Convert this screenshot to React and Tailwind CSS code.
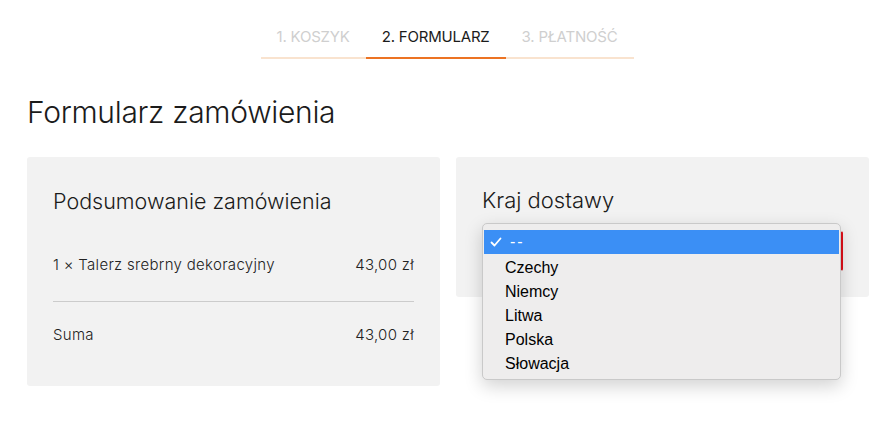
import React from "react";

const steps = [
  { label: "1. KOSZYK", active: false },
  { label: "2. FORMULARZ", active: true },
  { label: "3. PŁATNOŚĆ", active: false },
];

const countries = ["Czechy", "Niemcy", "Litwa", "Polska", "Słowacja"];

function Steps() {
  return (
    <div className="flex justify-center pt-[27px]">
      <div className="flex">
        {steps.map((s) => (
          <div
            key={s.label}
            className={`px-4 pb-[10px] text-[15px] leading-[20px] tracking-[-0.2px] border-b-2 ${
              s.active ? "text-[#1b1b1b] border-[#ec7323]" : "text-[#cfcfcf] border-[#f9e3cf]"
            }`}
          >
            {s.label}
          </div>
        ))}
      </div>
    </div>
  );
}

function SummaryCard() {
  return (
    <div className="bg-[#f2f2f2] rounded-[3px] px-[26px] pt-[30px] pb-[41px]">
      <h2 className="text-[21.5px] leading-[28px] font-light text-[#1b1b1b]">Podsumowanie zamówienia</h2>
      <div className="flex justify-between mt-[40px] text-[15px] leading-[20px] tracking-[0.3px] text-[#222] font-light">
        <span>1 × Talerz srebrny dekoracyjny</span>
        <span>43,00 zł</span>
      </div>
      <div className="h-px bg-[#cccccc] mt-[26px]" />
      <div className="flex justify-between mt-[23px] text-[15px] leading-[20px] tracking-[0.3px] text-[#222] font-light">
        <span>Suma</span>
        <span>43,00 zł</span>
      </div>
    </div>
  );
}

function CountryCard() {
  return (
    <div className="relative bg-[#f2f2f2] rounded-[3px] px-[26px] pt-[29px] h-[140px] self-start">
      <h2 className="text-[22px] leading-[28px] font-light text-[#1b1b1b]">Kraj dostawy</h2>
      <div className="mt-[17px] h-[40px] bg-white border border-[#d8d8d8] border-r-2 border-r-[#e0101a] rounded-[2px]" />
      {/* open native dropdown */}
      <div
        className="absolute left-[26px] top-[66px] w-[359px] rounded-[5px] bg-[#eeeded] border border-[#c9c9c9] shadow-[0_6px_18px_rgba(0,0,0,0.18)] pt-[6px] pb-[5px]"
        style={{ fontFamily: '"Liberation Sans", Arial, sans-serif' }}
      >
        <div className="flex items-center h-[24px] bg-[#3b8ff5] text-white text-[16px] mx-px">
          <svg className="w-[12px] h-[12px] ml-[6px] mr-[8px]" viewBox="0 0 12 12" fill="none" stroke="white" strokeWidth="1.8" strokeLinecap="round" strokeLinejoin="round">
            <path d="M1.5 6.5 L4.5 9.5 L10.5 2.5" />
          </svg>
          <span className="tracking-[2px]">--</span>
        </div>
        {countries.map((c) => (
          <div key={c} className="h-[24px] flex items-center pl-[22px] pt-[4px] text-[16px] text-black">
            {c}
          </div>
        ))}
      </div>
    </div>
  );
}

export default function App() {
  return (
    <div className="w-[894px] h-[423px] bg-white overflow-hidden" style={{ fontFamily: "Inter, 'Noto Sans', sans-serif" }}>
      <Steps />
      <div className="pl-[27px] pr-[25px]">
        <h1 className="mt-[35px] text-[30px] leading-[36px] font-light text-[#1b1b1b] tracking-[-0.3px]">Formularz zamówienia</h1>
        <div className="grid grid-cols-2 gap-4 mt-[27px] items-start">
          <SummaryCard />
          <CountryCard />
        </div>
      </div>
    </div>
  );
}
